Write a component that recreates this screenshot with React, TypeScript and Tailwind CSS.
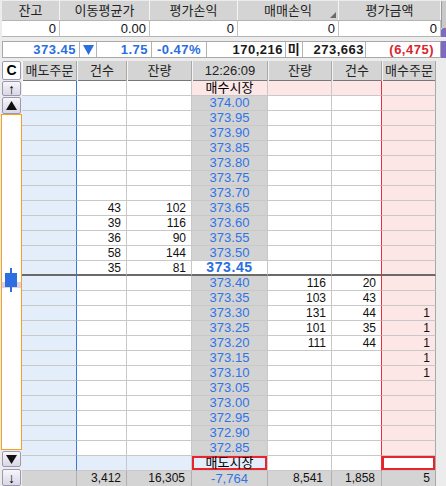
import React from "react";

const FONT = "font-['Liberation_Sans','Noto_Sans_CJK_KR',sans-serif]";
const GRID = "grid grid-cols-[55px_50px_65px_76px_64px_50px_54px]";

type Kind = "top" | "sell" | "cur" | "buy" | "bottom";
type Row = { kind: Kind; price: string; a?: string; b?: string; c?: string; d?: string; e?: string };

const sellInfo: Record<string, [string, string]> = {
  "373.65": ["43", "102"],
  "373.60": ["39", "116"],
  "373.55": ["36", "90"],
  "373.50": ["58", "144"],
  "373.45": ["35", "81"],
};

const buyInfo: Record<string, [string, string, string]> = {
  "373.40": ["116", "20", ""],
  "373.35": ["103", "43", ""],
  "373.30": ["131", "44", "1"],
  "373.25": ["101", "35", "1"],
  "373.20": ["111", "44", "1"],
  "373.15": ["", "", "1"],
  "373.10": ["", "", "1"],
};

function buildRows(): Row[] {
  const rows: Row[] = [{ kind: "top", price: "매수시장" }];
  for (let i = 0; i < 24; i++) {
    const p = (374 - i * 0.05).toFixed(2);
    if (i < 12) {
      const s = sellInfo[p];
      rows.push({ kind: i === 11 ? "cur" : "sell", price: p, b: s?.[0], c: s?.[1] });
    } else {
      const s = buyInfo[p];
      rows.push({ kind: "buy", price: p, d: s?.[0], e: s?.[1], a: s?.[2] });
    }
  }
  rows.push({ kind: "bottom", price: "매도시장" });
  return rows;
}

function BookRow({ r }: { r: Row }) {
  const top = r.kind === "top";
  const bottom = r.kind === "bottom";
  const cur = r.kind === "cur";
  const line = cur ? "border-b-2 border-b-[#6a6a6a]" : "border-b border-b-[#c8c8c8]";
  const base = `h-[15px] border-r text-right pr-[5px] text-[12px] leading-[14px] text-[#111] whitespace-nowrap ${line}`;

  return (
    <>
      <div className={`${base} border-r-[#3c78d8] ${top ? "bg-white" : "bg-[#e3eefa]"}`} />
      <div className={`${base} border-r-[#c8c8c8] ${bottom ? "bg-[#e3eefa]" : "bg-white"}`}>{r.b}</div>
      <div className={`${base} border-r-[#c8c8c8] ${bottom ? "bg-[#e3eefa]" : "bg-white"}`}>{r.c}</div>
      {top ? (
        <div className={`${base} border-r-[#c8c8c8] bg-[#fce6e6] !text-center !pr-0 !text-[13px] !text-black`}>{r.price}</div>
      ) : bottom ? (
        <div className={`${base} border-r-[#c8c8c8] bg-[#e3eefa] !pr-0`}>
          <div className="h-[14px] border-2 border-[#e8242c] text-center text-[13px] leading-[10px] text-black">{r.price}</div>
        </div>
      ) : cur ? (
        <div className={`${base} border-r-[#c8c8c8] bg-white !text-center !pr-0 !text-[14px] font-bold !leading-[13px] tracking-[0.6px] !text-[#2a6ee0]`}>
          {r.price}
        </div>
      ) : (
        <div className={`${base} border-r-[#c8c8c8] bg-[#d3d3d3] !text-center !pr-0 !text-[13px] !text-[#2f74e6]`}>{r.price}</div>
      )}
      <div className={`${base} border-r-[#c8c8c8] ${top ? "bg-[#fce6e6]" : "bg-white"}`}>{r.d}</div>
      <div className={`${base} border-r-[#e8303a] ${top ? "bg-[#fce6e6]" : "bg-white"}`}>{r.e}</div>
      {bottom ? (
        <div className={`${base} border-r-[#a8a8a8] bg-white !pr-0`}>
          <div className="h-[14px] border-2 border-[#e8242c]" />
        </div>
      ) : (
        <div className={`${base} border-r-[#a8a8a8] bg-[#fce6e6]`}>{r.a}</div>
      )}
    </>
  );
}

function SideButton({ children, h }: { children: React.ReactNode; h: string }) {
  return (
    <div
      className={`${h} ml-[2px] w-[19px] flex items-center justify-center rounded-[2px] border border-[#9c98b2] bg-gradient-to-b from-[#f7f6fb] to-[#d9d7e4]`}
    >
      {children}
    </div>
  );
}

function Tri({ down }: { down?: boolean }) {
  return (
    <svg width="11" height="9" viewBox="0 0 11 9">
      <polygon points={down ? "0,0 11,0 5.5,9" : "0,9 11,9 5.5,0"} fill="#111" />
    </svg>
  );
}

export default function App() {
  const rows = buildRows();
  const topHead = [
    { t: "잔고", w: "w-[58px]", v: "0" },
    { t: "이동평균가", w: "w-[90px]", v: "0.00" },
    { t: "평가손익", w: "w-[88px]", v: "0" },
    { t: "매매손익", w: "w-[101px]", v: "0", mark: true },
    { t: "평가금액", w: "w-[102px]", v: "0" },
  ];
  const bookHead = ["매도주문", "건수", "잔량", "12:26:09", "잔량", "건수", "매수주문"];

  return (
    <div className={`${FONT} w-[446px] h-[486px] bg-[#ececec] overflow-hidden flex flex-col`}>
      {/* account summary */}
      <div className="flex h-[37px] pt-[1px]">
        <div className="ml-[2px] w-[439px] flex flex-col">
          <div className="flex h-[20px] bg-[#d4d4d4] border-b border-[#b4b4b4]">
            {topHead.map((c) => (
              <div
                key={c.t}
                className={`${c.w} relative border-r border-r-[#f4f4f4] flex items-center justify-center text-[13px] text-[#222]`}
              >
                {c.t}
                {c.mark && (
                  <svg className="absolute right-[2px] bottom-[2px]" width="6" height="6" viewBox="0 0 6 6">
                    <polygon points="6,0 6,6 0,6" fill="#6a6a6a" />
                  </svg>
                )}
              </div>
            ))}
          </div>
          <div className="flex h-[16px] bg-white border-b border-[#b4b4b4]">
            {topHead.map((c) => (
              <div
                key={c.t}
                className={`${c.w} border-r border-r-[#c4c4c4] text-right pr-[3px] text-[13px] leading-[15px] text-[#111]`}
              >
                {c.v}
              </div>
            ))}
          </div>
        </div>
        <div className="w-[5px] flex flex-col">
          <div className="h-[27px] bg-[#c9c9c9] border-l border-[#9a9a9a]" />
          <div className="flex-1 bg-[#7d6bc2] rounded-tl-[3px]" />
        </div>
      </div>

      {/* current price strip */}
      <div className="flex mt-[4px] h-[17px]">
        <div className="ml-[2px] w-[439px] flex bg-white border border-[#a8a8a8] text-[13px] leading-[15px] font-bold tracking-[0.5px]">
          <div className="w-[77px] border-r border-[#b4b4b4] text-right pr-[3px] text-[#2a6ee0]">373.45</div>
          <div className="w-[17px] border-r border-[#b4b4b4] flex items-center justify-center">
            <svg width="11" height="10" viewBox="0 0 11 10">
              <polygon points="0,0 11,0 5.5,10" fill="#2a6ee0" />
            </svg>
          </div>
          <div className="w-[55px] border-r border-[#b4b4b4] text-right pr-[3px] text-[#2a6ee0]">1.75</div>
          <div className="w-[55px] border-r border-[#b4b4b4] text-center text-[#2a6ee0]">-0.47%</div>
          <div className="w-[79px] border-r border-[#b4b4b4] text-right pr-[2px] text-[#1a1a1a]">170,216</div>
          <div className="w-[17px] border-r border-[#b4b4b4] text-center text-[13px] text-[#1a1a1a]">미</div>
          <div className="w-[63px] border-r border-[#b4b4b4] text-right pr-[1px] text-[#1a1a1a]">273,663</div>
          <div className="w-[74px] text-right pr-[6px] text-[#d9262c]">(6,475)</div>
        </div>
        <div className="w-[5px] bg-[#7d6bc2]" />
      </div>

      {/* order book */}
      <div className="flex mt-[3px] flex-1">
        <div className="w-[22px] flex flex-col">
          <div className="h-[19px] ml-[2px] w-[19px] flex items-center justify-center border border-[#9c98b2] bg-white rounded-[2px] font-bold text-[14px] text-black">
            C
          </div>
          <div className="h-[1px]" />
          <SideButton h="h-[15px]">
            <span className="text-[14px] leading-[14px] text-black">↑</span>
          </SideButton>
          <div className="h-[1px]" />
          <SideButton h="h-[17px]">
            <Tri />
          </SideButton>
          <div className="relative ml-[1px] w-[21px] h-[336px] bg-white border border-[#f7a01e]">
            <div className="absolute left-0 right-0 top-[167px] h-[6px] bg-[#ddd0e4]" />
            <svg className="absolute left-[3px] top-[153px]" width="13" height="24" viewBox="0 0 13 24">
              <rect x="5" y="0" width="2" height="24" fill="#2f6ee0" />
              <rect x="0" y="5" width="12" height="14" fill="#2f6ee0" />
            </svg>
          </div>
          <div className="h-[1px]" />
          <SideButton h="h-[16px]">
            <Tri down />
          </SideButton>
          <div className="h-[2px]" />
          <SideButton h="h-[17px]">
            <span className="text-[14px] leading-[14px] text-black">↓</span>
          </SideButton>
        </div>

        <div className="w-[414px] flex flex-col">
          <div className={`${GRID} h-[20px] bg-[#d4d4d4] border-b border-[#777]`}>
            {bookHead.map((t, i) => (
              <div
                key={i}
                className="border-r border-r-[#a8a8a8] border-l border-l-[#f4f4f4] flex items-center justify-center text-[13px] text-[#222]"
              >
                {t}
              </div>
            ))}
          </div>
          <div className={GRID}>
            {rows.map((r, i) => (
              <BookRow key={i} r={r} />
            ))}
          </div>
          <div className={`${GRID} h-[15px] bg-[#d4d4d4] text-[12px] leading-[15px] text-[#111]`}>
            <div className="border-r border-[#b0b0b0]" />
            <div className="border-r border-[#b0b0b0] text-right pr-[5px]">3,412</div>
            <div className="border-r border-[#b0b0b0] text-right pr-[6px]">16,305</div>
            <div className="border-r border-[#b0b0b0] text-center text-[13px] text-[#2f74e6]">-7,764</div>
            <div className="border-r border-[#b0b0b0] text-right pr-[8px]">8,541</div>
            <div className="border-r border-[#b0b0b0] text-right pr-[6px]">1,858</div>
            <div className="border-r border-[#a8a8a8] text-right pr-[5px]">5</div>
          </div>
        </div>

        <div className="w-[10px] bg-[#ececec]" />
      </div>
    </div>
  );
}
